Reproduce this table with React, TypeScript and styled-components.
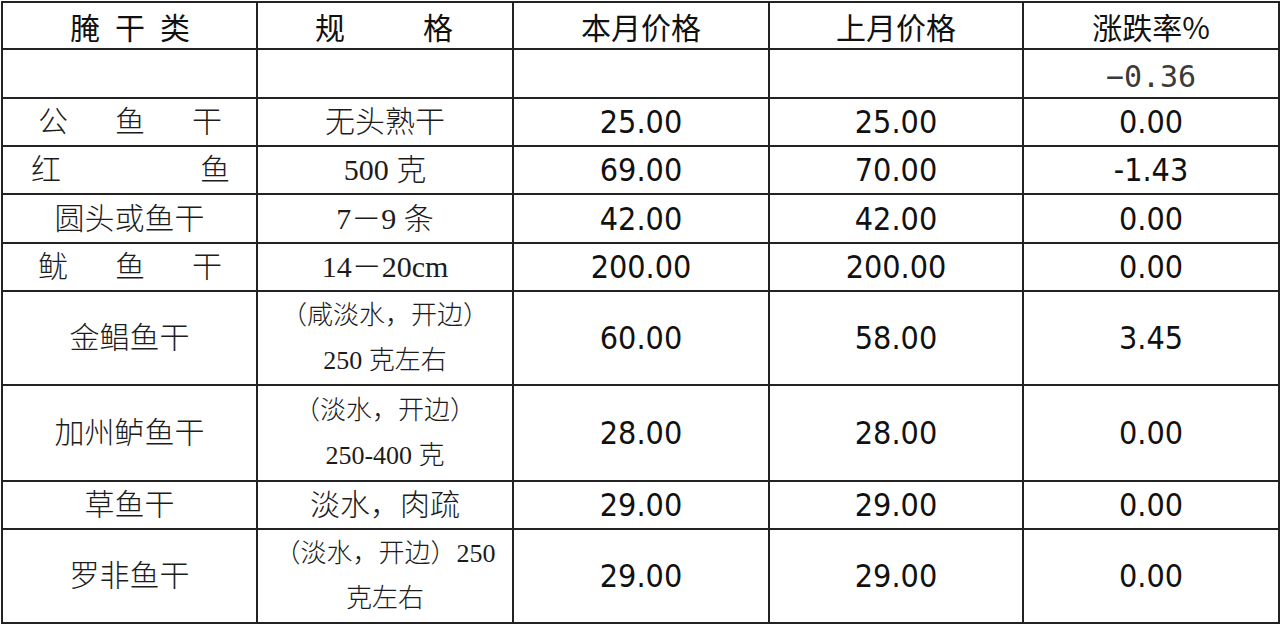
import React from "react";
import styled, { createGlobalStyle } from "styled-components";

const GlobalStyle = createGlobalStyle`
  html, body {
    margin: 0;
    padding: 0;
    background: #ffffff;
    overflow: hidden;
  }
`;

const Table = styled.table`
  width: 1277px;
  border-collapse: collapse;
  table-layout: fixed;
  color: #111;
  margin: 1px 0 0 1px;
`;

const Row = styled.tr<{ $h: number }>`
  height: ${(p) => p.$h}px;
`;

const Cell = styled.td`
  border: 2px solid #222;
  padding: 0;
  text-align: center;
  vertical-align: middle;
  white-space: nowrap;
`;

const HeadCell = styled(Cell)`
  font-family: "Noto Sans CJK SC", sans-serif;
  font-size: 30px;
  font-weight: 400;
  line-height: 1;
`;

const NameCell = styled(Cell)`
  font-family: "Liberation Serif", "Noto Sans CJK SC", serif;
  font-size: 30px;
  font-weight: 300;
  line-height: 1;
  color: #1c1c1c;
`;

const SpecCell = styled(Cell)<{ $small?: boolean }>`
  font-family: "Liberation Serif", "Noto Sans CJK SC", serif;
  font-size: ${(p) => (p.$small ? 26 : 30)}px;
  font-weight: 300;
  line-height: ${(p) => (p.$small ? "45px" : 1)};
  color: #1c1c1c;
`;

const NumCell = styled(Cell)`
  font-family: "DejaVu Sans Condensed", "Liberation Sans", sans-serif;
  font-size: 32px;
  line-height: 1;
`;

const RateText = styled.span`
  font-family: "DejaVu Sans Mono", "Liberation Mono", monospace;
  font-size: 30px;
  font-weight: 300;
  color: #3a3a3a;
  position: relative;
  top: 2px;
`;

const Spread = styled.div<{ $l: number; $r: number }>`
  display: flex;
  justify-content: space-between;
  padding: 0 ${(p) => p.$r}px 0 ${(p) => p.$l}px;
`;

type Item = {
  name: React.ReactNode;
  spec: React.ReactNode;
  small?: boolean;
  cur: string;
  prev: string;
  rate: string;
  h: number;
};

const spread = (chars: string[], l: number, r: number) => (
  <Spread $l={l} $r={r}>
    {chars.map((c, i) => (
      <span key={i}>{c}</span>
    ))}
  </Spread>
);

const items: Item[] = [
  { name: spread(["公", "鱼", "干"], 35, 34), spec: "无头熟干", cur: "25.00", prev: "25.00", rate: "0.00", h: 48 },
  { name: spread(["红", "鱼"], 28, 26), spec: "500 克", cur: "69.00", prev: "70.00", rate: "-1.43", h: 48 },
  { name: "圆头或鱼干", spec: "7－9 条", cur: "42.00", prev: "42.00", rate: "0.00", h: 49 },
  { name: spread(["鱿", "鱼", "干"], 35, 34), spec: "14－20cm", cur: "200.00", prev: "200.00", rate: "0.00", h: 48 },
  {
    name: "金鲳鱼干",
    spec: (
      <>
        （咸淡水，开边）
        <br />
        250 克左右
      </>
    ),
    small: true,
    cur: "60.00",
    prev: "58.00",
    rate: "3.45",
    h: 94,
  },
  {
    name: "加州鲈鱼干",
    spec: (
      <>
        （淡水，开边）
        <br />
        250-400 克
      </>
    ),
    small: true,
    cur: "28.00",
    prev: "28.00",
    rate: "0.00",
    h: 96,
  },
  { name: "草鱼干", spec: "淡水，肉疏", cur: "29.00", prev: "29.00", rate: "0.00", h: 48 },
  {
    name: "罗非鱼干",
    spec: (
      <>
        （淡水，开边）250
        <br />
        克左右
      </>
    ),
    small: true,
    cur: "29.00",
    prev: "29.00",
    rate: "0.00",
    h: 94,
  },
];

export default function App() {
  return (
    <>
      <GlobalStyle />
      <Table>
        <colgroup>
          <col style={{ width: 255 }} />
          <col style={{ width: 256 }} />
          <col style={{ width: 256 }} />
          <col style={{ width: 254 }} />
          <col style={{ width: 256 }} />
        </colgroup>
        <tbody>
          <Row $h={47}>
            <HeadCell>{spread(["腌", "干", "类"], 67, 66)}</HeadCell>
            <HeadCell>{spread(["规", "格"], 57, 59)}</HeadCell>
            <HeadCell>本月价格</HeadCell>
            <HeadCell>上月价格</HeadCell>
            <HeadCell>涨跌率%</HeadCell>
          </Row>
          <Row $h={49}>
            <NameCell />
            <SpecCell />
            <NumCell />
            <NumCell />
            <NumCell>
              <RateText>−0.36</RateText>
            </NumCell>
          </Row>
          {items.map((it, i) => (
            <Row key={i} $h={it.h}>
              <NameCell>{it.name}</NameCell>
              <SpecCell $small={it.small}>{it.spec}</SpecCell>
              <NumCell>{it.cur}</NumCell>
              <NumCell>{it.prev}</NumCell>
              <NumCell>{it.rate}</NumCell>
            </Row>
          ))}
        </tbody>
      </Table>
    </>
  );
}
